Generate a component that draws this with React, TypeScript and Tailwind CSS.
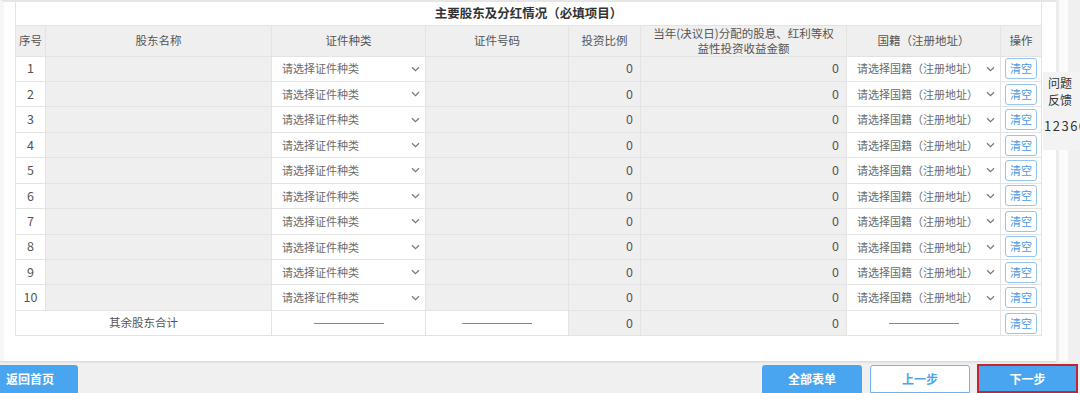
import React from "react";

const rows = [1, 2, 3, 4, 5, 6, 7, 8, 9, 10];

function Chevron() {
  return (
    <svg width="9" height="6" viewBox="0 0 9 6" className="shrink-0">
      <path d="M1 1.2 L4.5 4.6 L8 1.2" fill="none" stroke="#777" strokeWidth="1.2" />
    </svg>
  );
}

function Select({ text }: { text: string }) {
  return (
    <div className="flex items-center justify-between pl-[10px] pr-[5px] h-full text-[11px] text-[#6a6a6a]">
      <span>{text}</span>
      <Chevron />
    </div>
  );
}

function ClearBtn() {
  return (
    <div className="flex items-center justify-center h-full">
      <div className="w-[32px] h-[21px] border border-[#95c5ef] rounded-[3px] bg-white text-[11px] text-[#4c98e4] flex items-center justify-center leading-none">
        清空
      </div>
    </div>
  );
}

function Dash() {
  return (
    <div className="flex items-center justify-center h-full">
      <div className="w-[70px] border-t border-[#888]"></div>
    </div>
  );
}

export default function App() {
  const td = "border border-[#e3e3e3] p-0 h-[25.45px]";
  const gray = "bg-[#efefef]";
  const num = "text-right pr-[7px] text-[12.5px] text-[#555]";
  return (
    <div className="w-[1080px] h-[393px] overflow-hidden bg-[#f0f0f0] relative font-['Microsoft_YaHei','Noto_Sans_CJK_SC',sans-serif] text-[#555]">
      <div className="flex h-[361px]">
        <div className="w-[1056px] h-[361px] bg-white border-t-2 border-[#e6e6e6] border-l-[4px] border-l-[#f6f6f6] pl-[11px] shadow-[0_1px_2px_rgba(0,0,0,0.12)]">
          <table className="w-[1026px] table-fixed border-collapse">
            <colgroup>
              <col className="w-[30px]" />
              <col className="w-[226px]" />
              <col className="w-[154px]" />
              <col className="w-[143px]" />
              <col className="w-[72px]" />
              <col className="w-[206px]" />
              <col className="w-[154px]" />
              <col className="w-[41px]" />
            </colgroup>
            <tbody>
              <tr>
                <td colSpan={8} className="border border-[#e3e3e3] border-t-0 h-[23px] p-0 text-center text-[12.5px] font-bold text-[#333]">
                  主要股东及分红情况（必填项目）
                </td>
              </tr>
              <tr className="bg-[#efefef] text-[11.5px] text-[#555]">
                <td className="border border-[#e3e3e3] h-[31px] p-0 text-center">序号</td>
                <td className="border border-[#e3e3e3] p-0 text-center">股东名称</td>
                <td className="border border-[#e3e3e3] p-0 text-center">证件种类</td>
                <td className="border border-[#e3e3e3] p-0 text-center">证件号码</td>
                <td className="border border-[#e3e3e3] p-0 text-center">投资比例</td>
                <td className="border border-[#e3e3e3] p-0 text-center text-[11.5px] leading-[15px] px-[8px]">
                  当年(决议日)分配的股息、红利等权益性投资收益金额
                </td>
                <td className="border border-[#e3e3e3] p-0 text-center">国籍（注册地址）</td>
                <td className="border border-[#e3e3e3] p-0 text-center">操作</td>
              </tr>
              {rows.map((n) => (
                <tr key={n} className="text-[12px]">
                  <td className={`${td} text-center text-[#555] text-[12.5px]`}>{n}</td>
                  <td className={`${td} ${gray}`}></td>
                  <td className={td}>
                    <Select text="请选择证件种类" />
                  </td>
                  <td className={`${td} ${gray}`}></td>
                  <td className={`${td} ${gray} ${num}`}>0</td>
                  <td className={`${td} ${gray} ${num}`}>0</td>
                  <td className={td}>
                    <Select text="请选择国籍（注册地址）" />
                  </td>
                  <td className={td}>
                    <ClearBtn />
                  </td>
                </tr>
              ))}
              <tr className="text-[12px]">
                <td colSpan={2} className={`${td} text-center text-[#555] text-[11.5px]`}>其余股东合计</td>
                <td className={td}>
                  <Dash />
                </td>
                <td className={td}>
                  <Dash />
                </td>
                <td className={`${td} ${gray} ${num}`}>0</td>
                <td className={`${td} ${gray} ${num}`}>0</td>
                <td className={td}>
                  <Dash />
                </td>
                <td className={td}>
                  <ClearBtn />
                </td>
              </tr>
            </tbody>
          </table>
        </div>
        <div className="w-[3px] bg-[#ececec]"></div>
        <div className="w-[9px] bg-[#fbfbfb]"></div>
        <div className="flex-1 bg-[#f0f0f0]"></div>
      </div>
      <div className="flex items-start pt-[4px] h-[32px]">
        <div className="w-[78px] h-[28px] bg-[#4aa5f0] rounded-tr-[3px] text-white text-[12px] font-bold flex items-center pl-[6px]">
          返回首页
        </div>
        <div className="flex-1"></div>
        <div className="w-[100px] h-[28px] bg-[#4aa5f0] rounded-t-[3px] text-white text-[12px] font-bold flex items-center justify-center">
          全部表单
        </div>
        <div className="w-[100px] h-[28px] ml-[8px] bg-white border border-[#6fb4ee] rounded-t-[3px] text-[#4aa5f0] text-[12px] font-bold flex items-center justify-center">
          上一步
        </div>
        <div className="w-[101px] h-[29px] -mt-[1px] ml-[7px] mr-[2px] bg-[#4aa5f0] border-2 border-[#c1272d] text-white text-[12px] font-bold flex items-center justify-center">
          下一步
        </div>
      </div>
      <div className="absolute left-[1043px] top-[72px] w-[40px] h-[78px] bg-[#f3f3f3] text-[12px] text-[#333] pt-[2px] leading-[17px] overflow-hidden whitespace-nowrap">
        <div className="pl-[5px]">问题</div>
        <div className="pl-[5px]">反馈</div>
        <div className="mt-[9px] pl-[1px] text-[13px] tracking-[1.5px]">12366</div>
      </div>
    </div>
  );
}
